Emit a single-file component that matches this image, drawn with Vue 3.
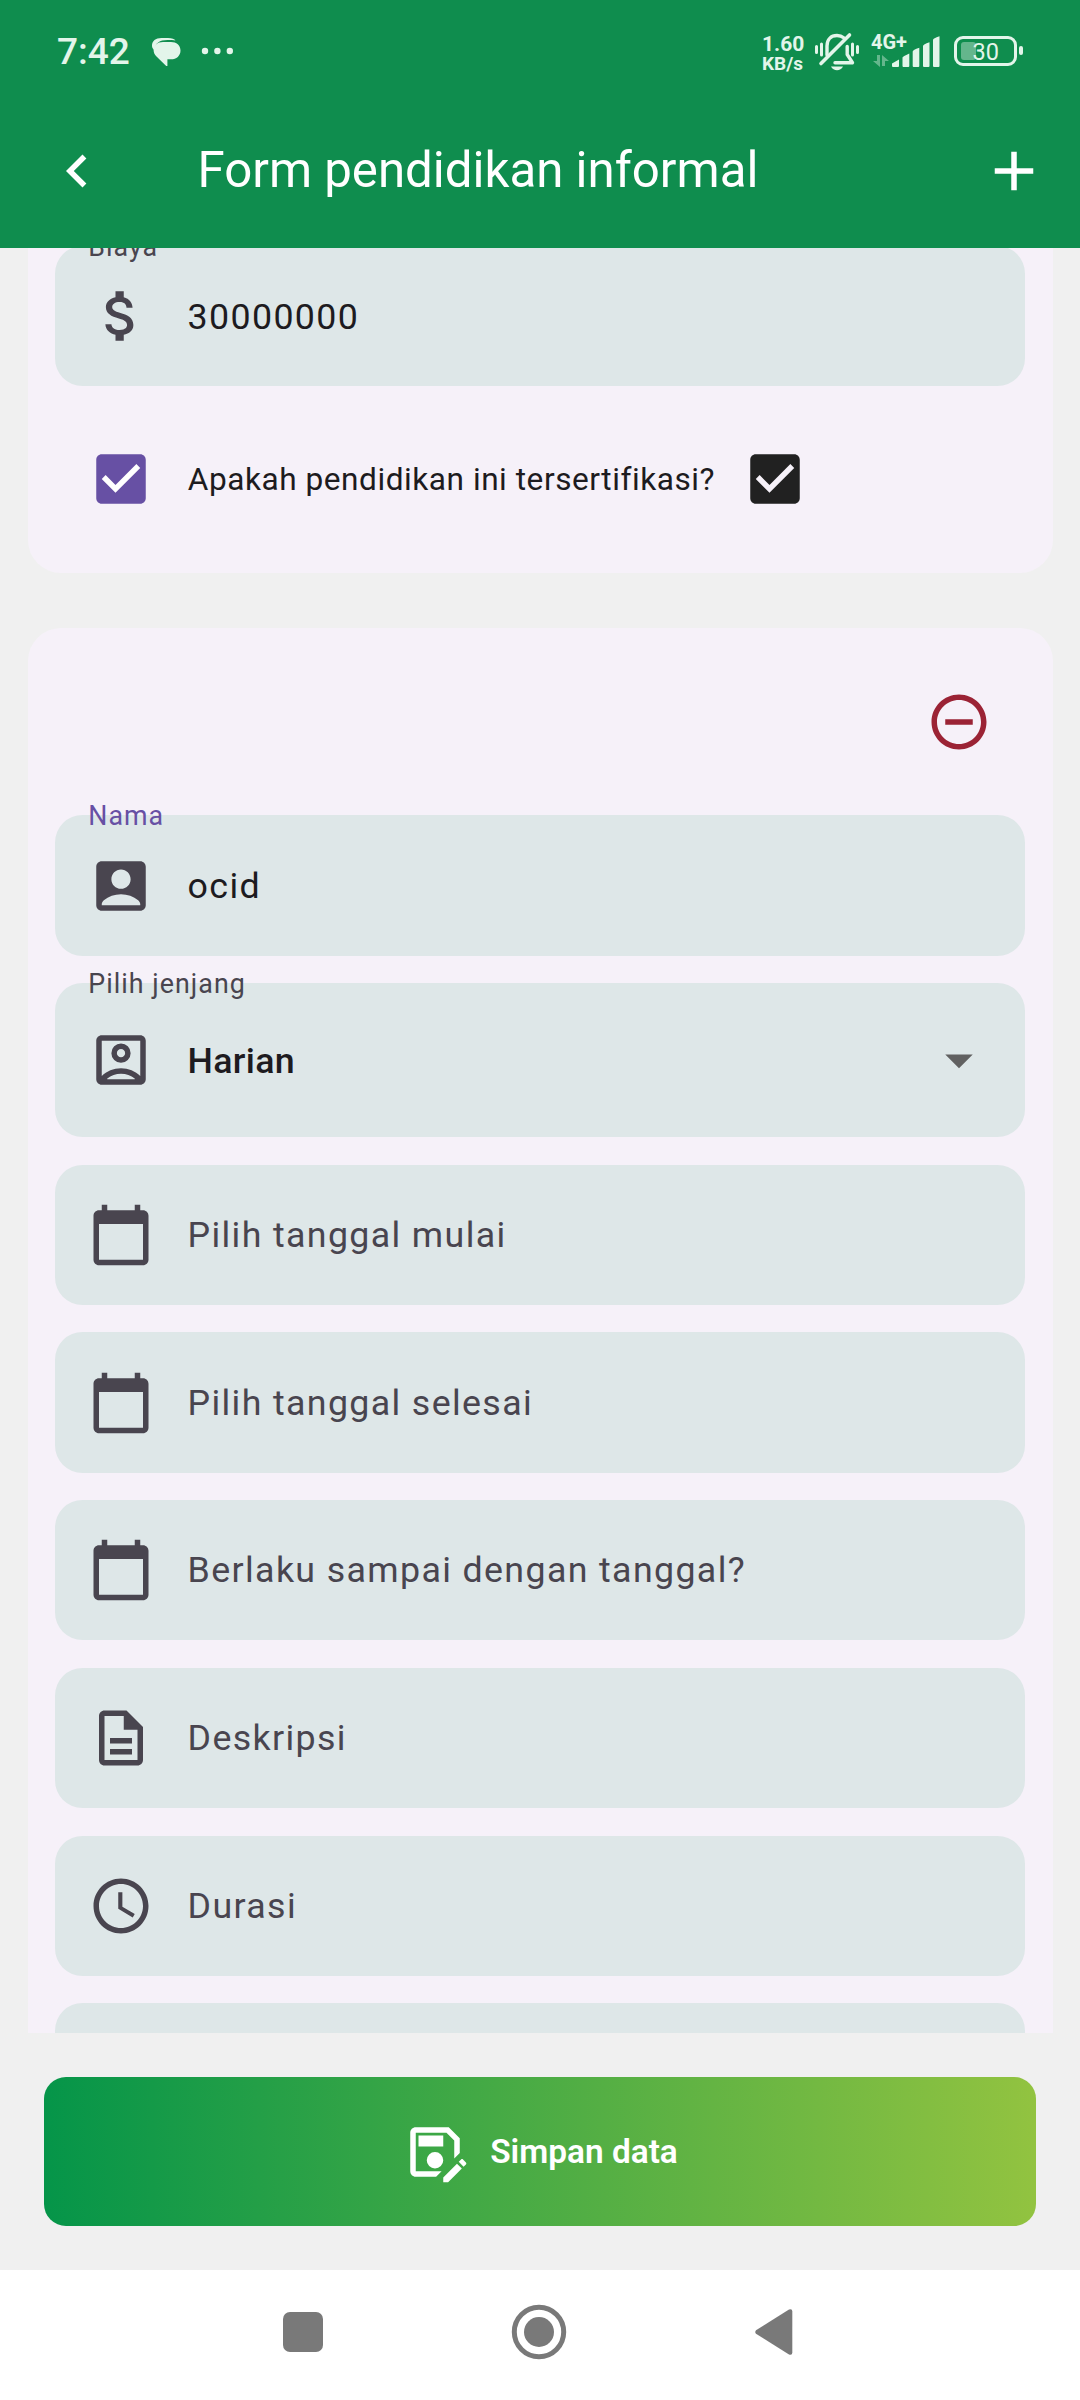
<script setup>
const icons = {
  money: 'M11.8 10.9c-2.27-.59-3-1.2-3-2.15 0-1.09 1.01-1.85 2.7-1.85 1.78 0 2.44.85 2.5 2.1h2.21c-.07-1.72-1.12-3.3-3.21-3.81V3h-3v2.16c-1.94.42-3.5 1.68-3.5 3.61 0 2.31 1.91 3.46 4.7 4.13 2.5.6 3 1.48 3 2.41 0 .69-.49 1.79-2.7 1.79-2.06 0-2.87-.92-2.98-2.1h-2.2c.12 2.19 1.76 3.42 3.68 3.83V21h3v-2.15c1.95-.37 3.5-1.5 3.5-3.55 0-2.84-2.43-3.81-4.7-4.4z',
  account: 'M19 3H5c-1.11 0-2 .9-2 2v14c0 1.1.89 2 2 2h14c1.1 0 2-.9 2-2V5c0-1.1-.9-2-2-2zm-7 3c1.93 0 3.5 1.57 3.5 3.5S13.93 13 12 13s-3.5-1.57-3.5-3.5S10.07 6 12 6zm7 13H5v-.23c0-.62.28-1.2.76-1.58C7.47 15.82 9.64 15 12 15s4.53.82 6.24 2.19c.48.38.76.97.76 1.58V19z',
  accountOutline: 'M19 3H5c-1.1 0-2 .9-2 2v14c0 1.1.9 2 2 2h14c1.1 0 2-.9 2-2V5c0-1.1-.9-2-2-2zM7 19v-.24C8.4 17.66 10.1 17 12 17s3.6.66 5 1.76V19H7zM19 17.86C17.2 16.05 14.7 15 12 15s-5.2 1.05-7 2.86V5h14v12.86zM12 6a3.5 3.5 0 1 0 0 7 3.5 3.5 0 0 0 0-7zm0 5a1.5 1.5 0 1 1 0-3 1.5 1.5 0 0 1 0 3z',
  calendar: 'M20 3h-1V1h-2v2H7V1H5v2H4c-1.1 0-2 .9-2 2v16c0 1.1.9 2 2 2h16c1.1 0 2-.9 2-2V5c0-1.1-.9-2-2-2zm0 18H4V8h16v13z',
  description: 'M8 16h8v2H8zm0-4h8v2H8zm6-10H6c-1.1 0-2 .9-2 2v16c0 1.1.89 2 1.99 2H18c1.1 0 2-.9 2-2V8l-6-6zm4 18H6V4h7v5h5v11z',
  clock: 'M11.99 2C6.47 2 2 6.48 2 12s4.47 10 9.99 10C17.52 22 22 17.52 22 12S17.52 2 11.99 2zM12 20c-4.42 0-8-3.58-8-8s3.58-8 8-8 8 3.58 8 8-3.58 8-8 8zm.5-13H11v6l5.25 3.15.75-1.23-4.5-2.67z',
  checkbox: 'M19 3H5c-1.11 0-2 .9-2 2v14c0 1.1.89 2 2 2h14c1.11 0 2-.9 2-2V5c0-1.1-.89-2-2-2zm-9 14l-5-5 1.41-1.41L10 14.17l7.59-7.59L19 8l-9 9z',
  remove: 'M7 11v2h10v-2H7zm5-9C6.48 2 2 6.48 2 12s4.48 10 10 10 10-4.48 10-10S17.52 2 12 2zm0 18c-4.41 0-8-3.59-8-8s3.59-8 8-8 8 3.59 8 8-3.59 8-8 8z',
  dropdown: 'M7 10l5 5 5-5z',
  back: 'M15.41 7.41L14 6l-6 6 6 6 1.41-1.41L10.83 12z',
  add: 'M19 13h-6v6h-2v-6H5v-2h6V5h2v6h6v2z',
  saveAs: 'M21 12.4V7l-4-4H5c-1.11 0-2 .9-2 2v14c0 1.1.89 2 2 2h7.4l2-2H5V5h11.17L19 7.83v6.57zM15 15a3 3 0 1 1-6 0 3 3 0 0 1 6 0zM6 6h9v4H6zM19.99 16.25l1.77 1.77L16.77 23H15v-1.77zM23.25 16.51l-.85.85-1.77-1.77.85-.85c.2-.2.51-.2.71 0l1.06 1.06c.2.2.2.52 0 .71z',
}

const fields = [
  { label: 'Nama', value: 'ocid', icon: 'account', focused: true },
  { label: 'Pilih jenjang', value: 'Harian', icon: 'accountOutline', select: true },
  { hint: 'Pilih tanggal mulai', icon: 'calendar' },
  { hint: 'Pilih tanggal selesai', icon: 'calendar' },
  { hint: 'Berlaku sampai dengan tanggal?', icon: 'calendar' },
  { hint: 'Deskripsi', icon: 'description' },
  { hint: 'Durasi', icon: 'clock' },
  {},
]
</script>

<template>
  <div class="screen">
    <header class="header">
      <div class="status">
        <span class="time">7:42</span>
        <svg class="chat" width="30" height="30" viewBox="0 0 30 30">
          <path d="M10.5 1h6.5c4 0 6.5 1.2 7.500 2.600-2-.6-4-.7-8-.7-8 0-12.300 3.200-13.300 10C1.300 11.500 1 10 1 8.500 1 4 4.500 1 10.500 1z" />
          <path d="M12 4.900h8c5.500 0 9.500 3.300 9.500 8.600s-4 8.800-9.500 8.800h-3.600V29h-1.200L5.500 19.500C3.500 17.500 2.600 15.500 2.600 13c0-5 4-8.100 9.400-8.100z" />
        </svg>
        <svg class="dots" width="34" height="8" viewBox="0 0 34 8">
          <circle cx="4" cy="4" r="3.200" /><circle cx="16.400" cy="4" r="3.200" /><circle cx="28.800" cy="4" r="3.200" />
        </svg>
        <div class="speed"><span>1.60</span><span class="unit">KB/s</span></div>
        <svg class="bell" width="44" height="40" viewBox="0 0 44 40">
          <g fill="none" stroke="#e3f5ea" stroke-width="3" stroke-linecap="round">
            <path d="M1.500 14.500v6M6.500 12v11M37.500 12v11M42.500 14.500v6" />
            <path d="M12 23V14c0-6.500 4-10.500 10-10.500 2.700 0 5 .8 6.700 2.200M32.200 14.500v8l5.300 8.200H20" stroke-width="3.400" stroke-linejoin="round" />
            <path d="M34.500 3L6 31.500" stroke-width="3.600" />
          </g>
          <path d="M16 34.500h12c-1.400 2.500-3.400 3.700-6 3.700s-4.600-1.200-6-3.700z" />
        </svg>
        <div class="network">
          <span>4G+</span>
          <svg width="16" height="12" viewBox="0 0 16 12" opacity=".4">
            <path d="M4 0h3v12L0 6h4zM9 0l7 6h-4v5H9z" />
          </svg>
        </div>
        <svg class="bars" width="48" height="32" viewBox="0 0 48 32">
          <path d="M0 27.500l7-4V30q0 1-1 1H1q-1 0-1-1zM10.500 21.500q0-1 6.800-4V30q0 1-1 1h-4.800q-1 0-1-1zM20.700 15.500q0-1.500 6.600-3.800V30q0 1-1 1h-4.600q-1 0-1-1zM31 10q0-1.500 6.500-3.700V30q0 1-1 1H32q-1 0-1-1zM41 4q0-1.800 6.500-3.700V30q0 1-1 1H42q-1 0-1-1z" />
        </svg>
        <div class="battery"><i class="charge"></i><span>30</span></div>
        <i class="nub"></i>
      </div>
      <div class="appbar">
        <svg class="icon" viewBox="0 0 24 24"><path :d="icons.back" /></svg>
        <h1>Form pendidikan informal</h1>
        <svg class="icon add" viewBox="0 0 24 24"><path :d="icons.add" /></svg>
      </div>
    </header>

    <main class="scroll">
      <section class="card previous">
        <div class="field">
          <span class="label">Biaya</span>
          <svg class="icon" viewBox="0 0 24 24"><path :d="icons.money" /></svg>
          <span class="text value">30000000</span>
        </div>
        <div class="certified">
          <svg class="icon purple" viewBox="0 0 24 24">
            <path class="tick" d="M4 5h16v13H4z" /><path :d="icons.checkbox" />
          </svg>
          <span class="question">Apakah pendidikan ini tersertifikasi?</span>
          <svg class="icon dark" viewBox="0 0 24 24"><path :d="icons.checkbox" /></svg>
        </div>
      </section>

      <section class="card">
        <div class="tools">
          <svg class="icon remove" viewBox="0 0 24 24"><path :d="icons.remove" /></svg>
        </div>
        <div v-for="(f, i) in fields" :key="i" class="field" :class="{ select: f.select }">
          <span v-if="f.label" class="label" :class="{ focused: f.focused }">{{ f.label }}</span>
          <svg v-if="f.icon" class="icon" viewBox="0 0 24 24"><path :d="icons[f.icon]" /></svg>
          <span class="text" :class="{ value: f.value }">{{ f.value || f.hint }}</span>
          <svg v-if="f.select" class="icon arrow" viewBox="0 0 24 24"><path :d="icons.dropdown" /></svg>
        </div>
      </section>
    </main>

    <footer class="actions">
      <button class="save">
        <svg class="icon" viewBox="0 0 24 24"><path :d="icons.saveAs" /></svg>
        <span>Simpan data</span>
      </button>
    </footer>

    <nav class="nav">
      <svg width="40" height="40" viewBox="0 0 40 40"><rect width="40" height="40" rx="7" /></svg>
      <svg class="home" width="56" height="56" viewBox="0 0 56 56">
        <circle cx="28" cy="28" r="24.700" fill="none" stroke="#797979" stroke-width="5" /><circle cx="28" cy="28" r="15" />
      </svg>
      <svg width="38" height="46" viewBox="0 0 38 46">
        <path d="M1 21.200L34 .6Q37.300-.5 37.300 2.500v41q0 3-3.300 1.900L1 24.800Q-.5 23 1 21.200z" />
      </svg>
    </nav>
  </div>
</template>

<style>
body {
  margin: 0;
}
</style>

<style scoped>
.screen {
  width: 1080px;
  height: 2400px;
  display: flex;
  flex-direction: column;
  overflow: hidden;
  background: #f0f0f0;
  font-family: Roboto, sans-serif;
}
.icon {
  width: 66px;
  height: 66px;
  flex: none;
  fill: currentColor;
}
.header {
  height: 248px;
  flex: none;
  background: #0f8d4e;
  color: #fff;
}
.status {
  height: 94px;
  display: flex;
  align-items: flex-start;
  box-sizing: border-box;
  padding: 0 57px;
  color: #e3f5ea;
  fill: #e3f5ea;
}
.time {
  width: 94px;
  margin-top: 30px;
  font-size: 37px;
  font-weight: 500;
  line-height: 44px;
}
.chat {
  margin-top: 37px;
}
.dots {
  margin: 47px 0 0 20px;
}
.speed {
  width: 53px;
  margin: 35px 0 0 527px;
  display: flex;
  flex-direction: column;
  font-size: 21px;
  font-weight: 700;
  line-height: 19px;
}
.unit {
  font-size: 19px;
}
.bell {
  margin-top: 32px;
}
.network {
  width: 33px;
  margin: 32px 0 0 12px;
  font-size: 20px;
  font-weight: 700;
  line-height: 20px;
  display: flex;
  flex-direction: column;
  gap: 3px;
}
.network svg {
  margin-left: 2px;
}
.bars {
  flex: none;
  margin: 36px 0 0 -12px;
}
.battery {
  width: 63px;
  height: 30px;
  flex: none;
  box-sizing: border-box;
  margin: 36px 0 0 14px;
  border: 3px solid #e3f5ea;
  border-radius: 9px;
  display: flex;
  align-items: center;
  padding-left: 4px;
}
.charge {
  width: 15px;
  height: 18px;
  border-radius: 3px;
  background: rgba(227, 245, 234, 0.400);
}
.battery span {
  margin: 1px 0 0 -3.500px;
  font-size: 23.500px;
  line-height: 26px;
}
.nub {
  width: 4px;
  height: 9px;
  flex: none;
  margin: 46px 0 0 2px;
  border-radius: 2px;
  background: #e3f5ea;
}
.appbar {
  height: 154px;
  display: flex;
  align-items: center;
  padding: 0 33px 0 44px;
}
h1 {
  margin: -3px auto 0 87.500px;
  font-size: 49.200px;
  font-weight: 400;
  line-height: 60px;
}
.scroll {
  height: 785px;
  flex: 1;
  overflow: hidden;
  padding: 0 27.500px;
}
.card {
  box-sizing: border-box;
  padding: 0 27.500px;
  border-radius: 33px;
  background: #f6f1f9;
}
.previous {
  height: 360px;
  margin: -35px 0 55px;
  padding-top: 32.700px;
}
.field {
  position: relative;
  height: 140.250px;
  box-sizing: border-box;
  margin-bottom: 27.500px;
  padding: 0 33px;
  display: flex;
  align-items: center;
  border-radius: 27.500px;
  background: #dee7e8;
  color: #49454f;
}
.field.select {
  height: 154px;
}
.label {
  position: absolute;
  left: 33.300px;
  top: -15.600px;
  font-size: 26.800px;
  line-height: 32px;
  letter-spacing: 1.030px;
}
.label.focused {
  color: #6750a4;
}
.text {
  flex: 1;
  margin-left: 33.600px;
  font-size: 35.750px;
  line-height: 44px;
  letter-spacing: 1.360px;
}
.value {
  color: #1d1b20;
}
.previous .label {
  top: -14.600px;
}
.previous .text {
  padding-top: 2px;
}
.select .text {
  font-weight: 500;
  letter-spacing: 0.300px;
  padding-top: 2px;
}
.arrow {
  color: #616161;
}
.certified {
  margin-top: 60.500px;
  padding-left: 33px;
  height: 66px;
  display: flex;
  align-items: center;
}
.question {
  width: 554.200px;
  margin-left: 33.800px;
  padding-top: 1px;
  box-sizing: border-box;
  font-size: 31.600px;
  line-height: 40px;
  letter-spacing: 0.540px;
  color: #1d1b20;
  white-space: nowrap;
}
.purple {
  color: #6750a4;
}
.tick {
  fill: #fff;
}
.dark {
  color: #212121;
}
.tools {
  height: 187.400px;
  box-sizing: border-box;
  padding: 61px 33px 0;
  display: flex;
  justify-content: flex-end;
  color: #9b2335;
}
.actions {
  height: 237px;
  flex: none;
  box-sizing: border-box;
  padding: 44px;
}
.save {
  width: 100%;
  height: 149px;
  border: 0;
  border-radius: 22px;
  background: linear-gradient(90deg, #059549, #92c340);
  display: flex;
  align-items: center;
  justify-content: center;
  gap: 22px;
  color: #fff;
  font: 600 33.400px/40px Roboto, sans-serif;
}
.nav {
  height: 130px;
  flex: none;
  box-sizing: border-box;
  padding: 0 287px 6px 283px;
  display: flex;
  align-items: center;
  justify-content: space-between;
  background: #fff;
  fill: #797979;
}
</style>
